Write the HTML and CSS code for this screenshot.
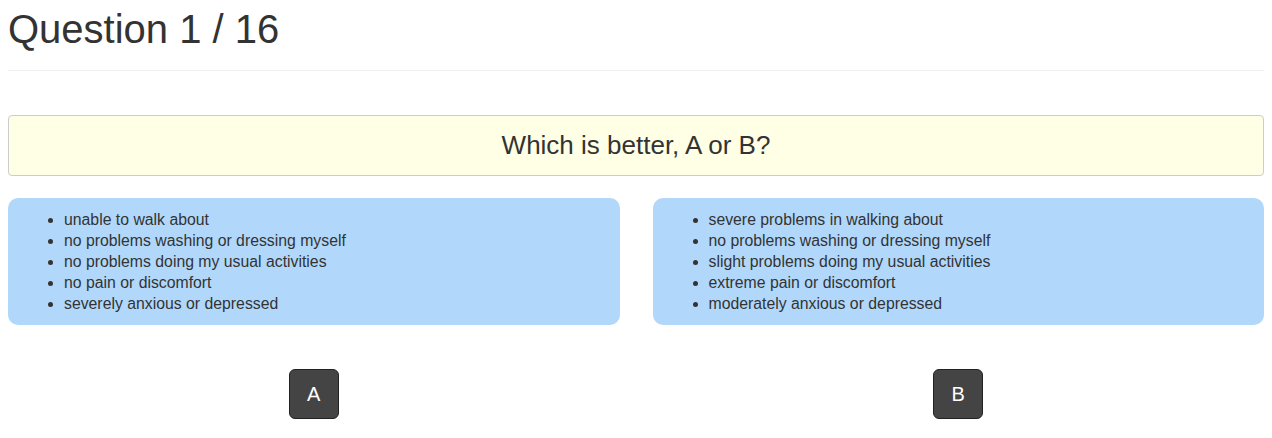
FILE: index.html
```html
<!DOCTYPE html>
<html lang="en">
<head>
    <meta charset="UTF-8">
    <meta name="viewport" content="width=device-width, initial-scale=1.0">
    <title>Question 1 / 16</title>
    <link rel="stylesheet" href="styles.css">
</head>
<body>
    <div class="container">
        <div class="page-header">
            <h1>Question 1 / 16</h1>
        </div>

        <div class="question">Which is better, A or B?</div>

        <div class="choices">
            <div class="choice">
                <div class="state">
                    <ul>
                        <li>unable to walk about</li>
                        <li>no problems washing or dressing myself</li>
                        <li>no problems doing my usual activities</li>
                        <li>no pain or discomfort</li>
                        <li>severely anxious or depressed</li>
                    </ul>
                </div>
                <button type="button" class="pick">A</button>
            </div>
            <div class="choice">
                <div class="state">
                    <ul>
                        <li>severe problems in walking about</li>
                        <li>no problems washing or dressing myself</li>
                        <li>slight problems doing my usual activities</li>
                        <li>extreme pain or discomfort</li>
                        <li>moderately anxious or depressed</li>
                    </ul>
                </div>
                <button type="button" class="pick">B</button>
            </div>
        </div>
    </div>
</body>
</html>
```

FILE: styles.css
```css
body {
    font-family: "Liberation Sans", Arial, sans-serif;
    font-size: 14px;
    line-height: 1.5;
    color: #333;
    background: #fff;
    margin: 0;
    padding: 0;
}

.container {
    padding: 0 8px;
}

.page-header {
    padding-top: 9px;
    padding-bottom: 21px;
    border-bottom: 1px solid #eee;
}

.page-header h1 {
    margin: 0;
    font-size: 40px;
    font-weight: 500;
    line-height: 40px;
}

.question {
    margin-top: 44px;
    background: #ffffe6;
    border: 1px solid #ccc;
    border-radius: 4px;
    height: 59px;
    line-height: 59px;
    text-align: center;
    font-size: 26px;
}

.choices {
    display: grid;
    grid-template-columns: 1fr 1fr;
    gap: 33px;
    margin-top: 22px;
}

.choice {
    display: flex;
    flex-direction: column;
    align-items: center;
}

.state {
    align-self: stretch;
    background: #b1d8fb;
    border-radius: 10px;
    padding: 11px 15px;
}

.state ul {
    margin: 0;
    padding-left: 41px;
    font-size: 15.8px;
    line-height: 21px;
}

.pick {
    margin-top: 44px;
    width: 50px;
    height: 50px;
    background: #444;
    color: #fff;
    border: 1px solid #222;
    border-radius: 6px;
    font-family: "Liberation Sans", Arial, sans-serif;
    font-size: 20px;
    cursor: pointer;
}

.pick:hover {
    background: #333;
}
```
